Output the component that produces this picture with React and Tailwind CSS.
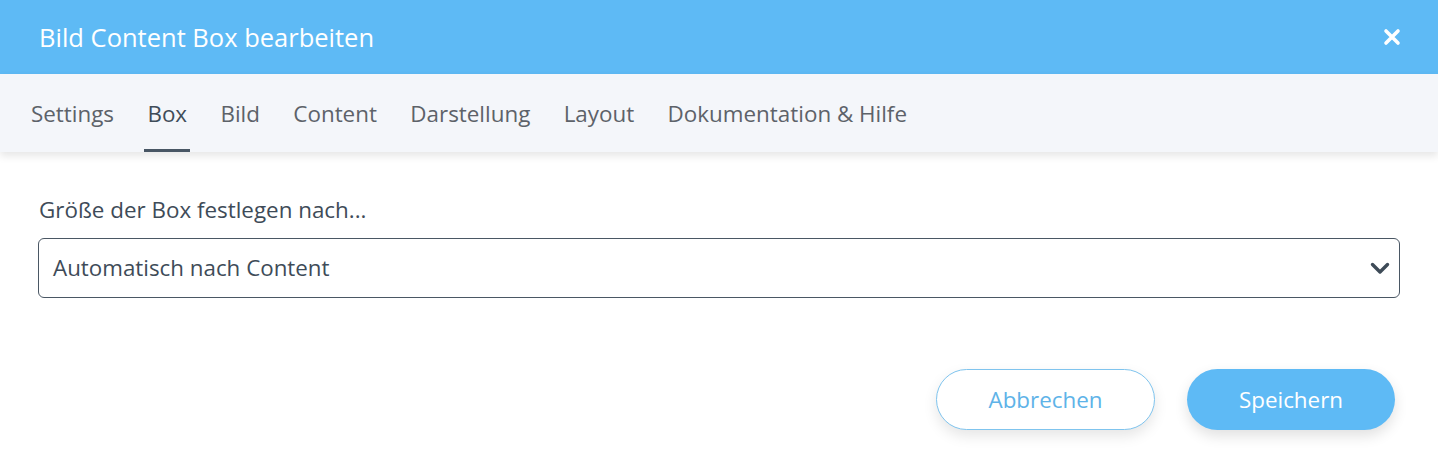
import React from "react";

const tabs = ["Settings", "Box", "Bild", "Content", "Darstellung", "Layout", "Dokumentation & Hilfe"];

function CloseIcon() {
  return (
    <svg width="18" height="18" viewBox="0 0 18 18" fill="none">
      <path d="M3 3L15 15M15 3L3 15" stroke="white" strokeWidth="3.6" strokeLinecap="round" />
    </svg>
  );
}

function Chevron() {
  return (
    <svg width="20" height="13" viewBox="0 0 20 13" fill="none">
      <path d="M2.5 2.5L10 10L17.5 2.5" stroke="#3e4b58" strokeWidth="3.4" strokeLinecap="round" strokeLinejoin="round" />
    </svg>
  );
}

export default function App() {
  return (
    <div className="w-[1438px] h-[466px] bg-white overflow-hidden" style={{ fontFamily: '"Open Sans", sans-serif' }}>
      <div className="h-[74px] bg-[#5ebaf5] flex items-center justify-between pl-[39px] pr-[37px]">
        <h1 className="text-[25.5px] text-white">Bild Content Box bearbeiten</h1>
        <CloseIcon />
      </div>
      <div className="relative h-[78px] bg-[#f4f6fa] shadow-[0_4px_8px_rgba(0,0,0,0.10)] flex items-stretch pl-[28px] gap-[27.4px]">
        {tabs.map((t) => (
          <div
            key={t}
            className={
              "relative flex items-center px-[3px] text-[22.4px] pt-[2px] " +
              (t === "Box" ? "text-[#3f4c59]" : "text-[#5d6269]")
            }
          >
            {t}
            {t === "Box" && <span className="absolute left-0 right-0 bottom-0 h-[3px] bg-[#485664]" />}
          </div>
        ))}
      </div>
      <div className="px-[38px] pt-[44px]">
        <div className="text-[22.4px] text-[#3e4b58] leading-[28px] pl-[1px]">Größe der Box festlegen nach...</div>
        <div className="mt-[14px] h-[60px] border border-[#4a5764] rounded-[6px] flex items-center justify-between pl-[14px] pr-[9px]">
          <span className="text-[22.35px] text-[#3e4b58]">Automatisch nach Content</span>
          <Chevron />
        </div>
        <div className="flex justify-end gap-[32px] mt-[71px] pr-[5px]">
          <button className="w-[219px] h-[61px] rounded-full border border-[#7fc4ee] bg-white text-[#5eb3e8] text-[22.4px] shadow-[0_6px_14px_rgba(0,0,0,0.10)]">
            Abbrechen
          </button>
          <button className="w-[208px] h-[61px] rounded-full bg-[#5ebaf5] text-white text-[22.4px] shadow-[0_6px_14px_rgba(0,0,0,0.12)]">
            Speichern
          </button>
        </div>
      </div>
    </div>
  );
}
